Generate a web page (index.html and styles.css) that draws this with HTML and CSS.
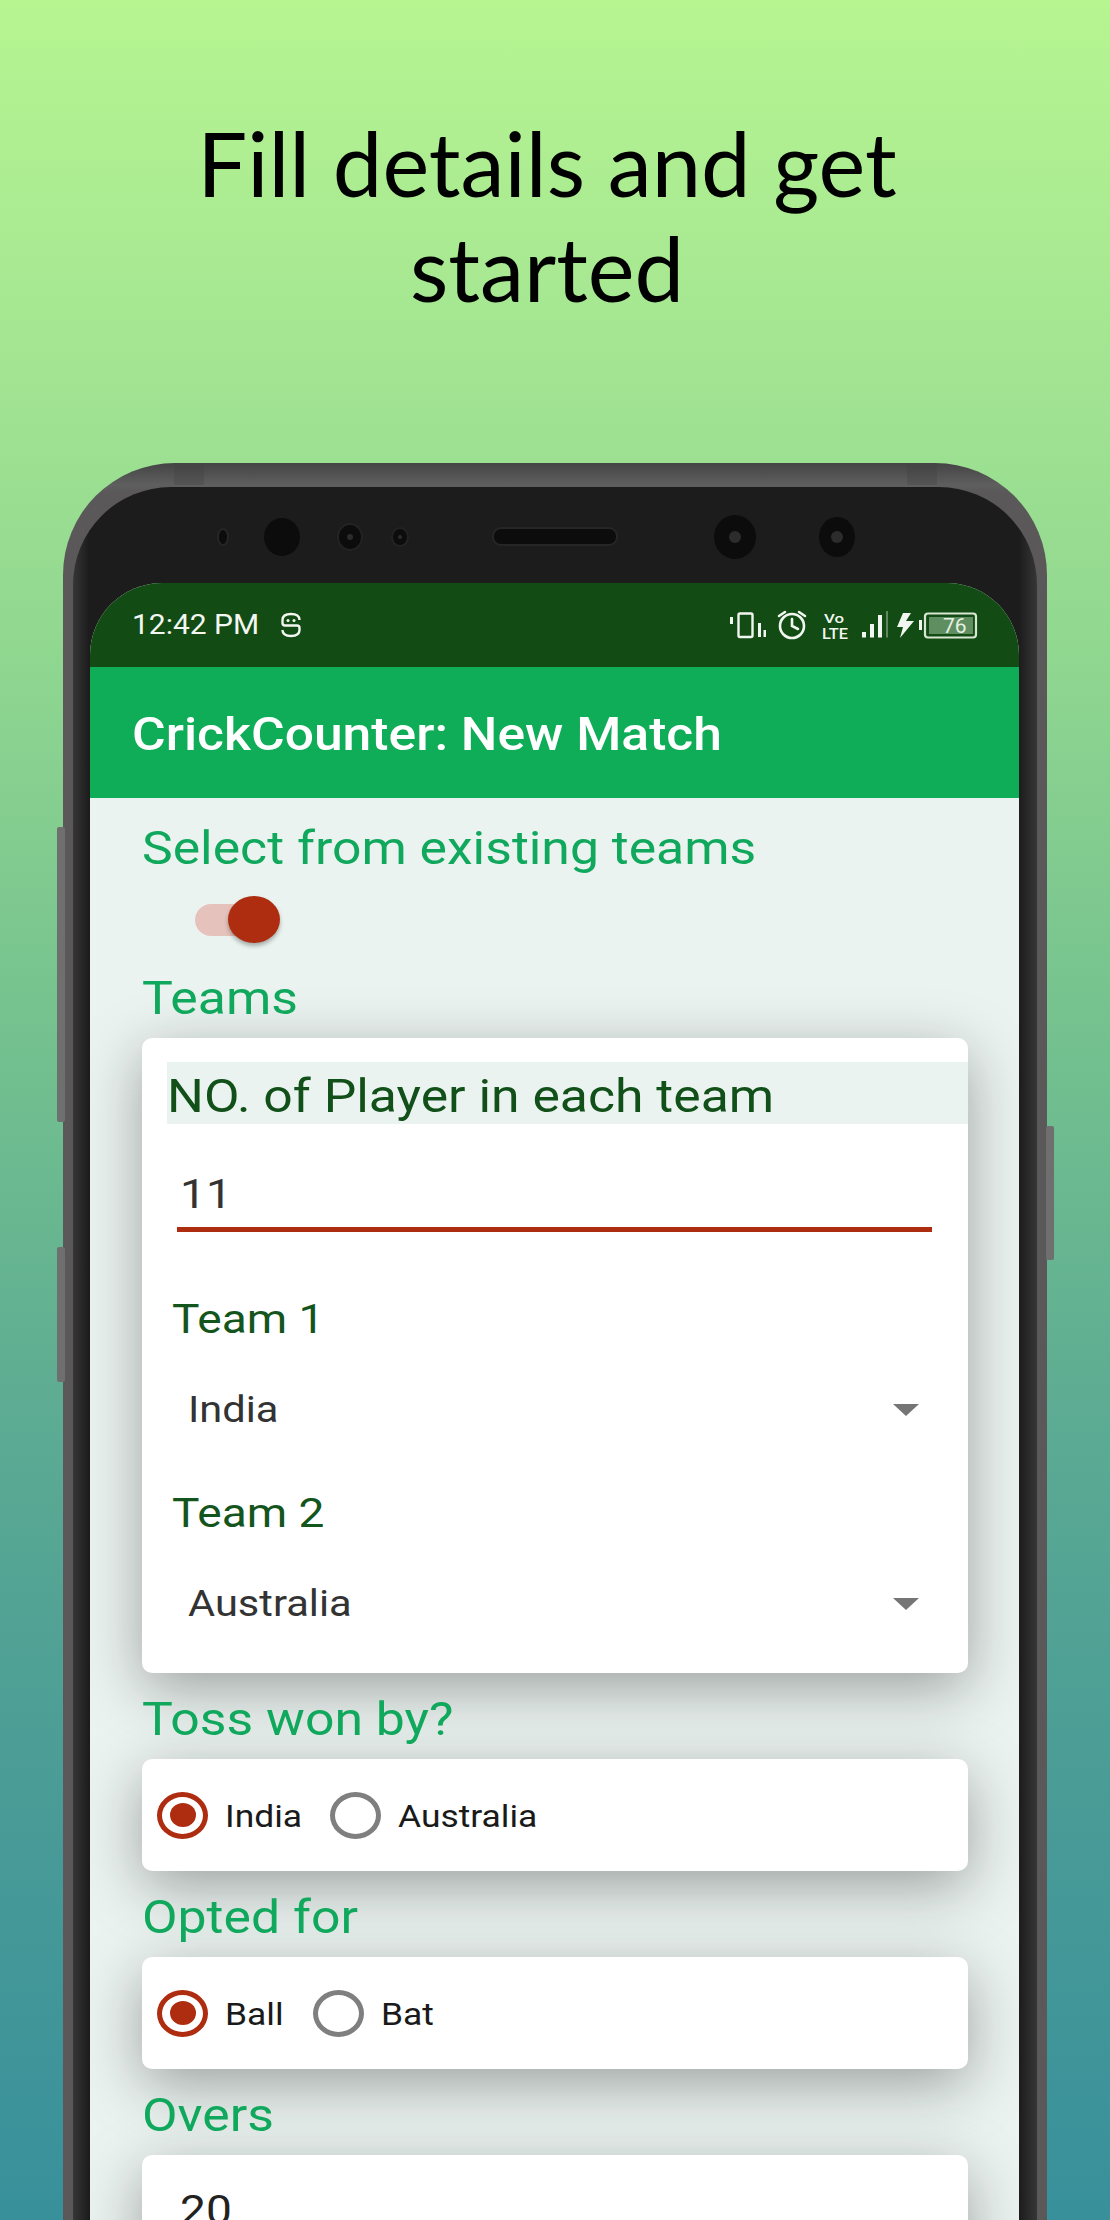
FILE: index.html
```html
<!DOCTYPE html>
<html lang="en">
<head>
<meta charset="utf-8">
<title>CrickCounter</title>
<link rel="stylesheet" href="styles.css">
</head>
<body>
<header class="hero"><h1 class="hero-title">Fill details and get<br>started</h1></header>
<div class="phone">
  <span class="side-btn side-left-a"></span>
  <span class="side-btn side-left-b"></span>
  <span class="side-btn side-right"></span>
  <span class="seam seam-left"></span>
  <span class="seam seam-right"></span>
  <div class="bezel">
    <svg class="sensors" viewBox="0 0 930 96" width="930" height="96">
      <g fill="#0c0c0c">
        <ellipse cx="133" cy="50" rx="5" ry="8" stroke="#262626" stroke-width="2"/>
        <ellipse cx="192" cy="50" rx="18" ry="19"/>
        <ellipse cx="260" cy="50" rx="12" ry="13" stroke="#232323" stroke-width="2"/>
        <ellipse cx="310" cy="50" rx="8" ry="9" stroke="#232323" stroke-width="2"/>
        <rect x="403" y="41" width="124" height="17" rx="8" stroke="#262626" stroke-width="2"/>
        <ellipse cx="645" cy="50" rx="21" ry="22"/>
        <ellipse cx="747" cy="50" rx="18" ry="20"/>
      </g>
      <circle cx="645" cy="50" r="6" fill="#2c2c2c"/>
      <circle cx="747" cy="50" r="6" fill="#2c2c2c"/>
      <circle cx="260" cy="50" r="3" fill="#2c2c2c"/>
      <circle cx="310" cy="50" r="2" fill="#2c2c2c"/>
    </svg>
    <div class="screen">
      <div class="status-bar">
        <span class="clock">12:42 PM</span>
        <svg class="status-s" viewBox="0 0 22 26" width="22" height="26">
          <path d="M19.5 8 Q19.5 2 11 2 Q2.5 2 2.5 8 V11 Q2.5 13.5 5 13.5 H17 Q19.5 13.5 19.5 16 V18 Q19.5 24 11 24 Q2.5 24 2.5 18" fill="none" stroke="#f3f6f1" stroke-width="2.4"/>
          <circle cx="8" cy="8.5" r="1.5" fill="#f3f6f1"/>
          <circle cx="14" cy="8.5" r="1.5" fill="#f3f6f1"/>
        </svg>
        <svg class="status-icons" viewBox="0 0 256 34" width="256" height="34">
          <rect x="8.5" y="5.5" width="14" height="23.5" rx="1.5" fill="none" stroke="#f2f6f0" stroke-width="2.4"/>
          <g fill="#f2f6f0">
            <rect x="0" y="9" width="3" height="7"/>
            <rect x="28" y="15" width="3" height="14"/>
            <rect x="33.5" y="22" width="2.5" height="7"/>
          </g>
          <g fill="none" stroke="#f2f6f0" stroke-width="2.6" stroke-linecap="round">
            <circle cx="62" cy="18" r="12"/>
            <path d="M62 11 V18 L68 21"/>
            <path d="M49 8 L55 4 M75 8 L69 4"/>
          </g>
          <text class="st-vo" x="94" y="14.5" textLength="20" lengthAdjust="spacingAndGlyphs">Vo</text>
          <text class="st-lte" x="92" y="31" textLength="26" lengthAdjust="spacingAndGlyphs">LTE</text>
          <g fill="#f2f6f0">
            <rect x="132" y="24" width="4" height="5.5"/>
            <rect x="140" y="16" width="4" height="13.5"/>
            <rect x="148" y="7" width="4" height="22.5"/>
            <rect x="156" y="3" width="2" height="26.5" opacity=".35"/>
          </g>
          <path d="M181 5 H173 L167 19 H173 L170 30 L184 13 H176 Z" fill="#f2f6f0"/>
          <rect x="189" y="12" width="3" height="10" fill="#f2f6f0"/>
          <rect x="195" y="5.5" width="51" height="24" rx="3" fill="none" stroke="#d9e6d4" stroke-width="2.2"/>
          <rect x="199" y="9" width="44" height="17" fill="#5f8f60"/>
          <text class="st-batt" x="213" y="25">76</text>
        </svg>
      </div>
      <div class="app-bar"><span class="app-title">CrickCounter: New Match</span></div>
      <main class="content">
        <div class="label label-first">Select from existing teams</div>
        <div class="toggle"><span class="toggle-track"></span><span class="toggle-thumb"></span></div>
        <div class="label label-tight">Teams</div>
        <section class="card card-teams">
          <div class="strip"><span class="wide">NO. of Player in each team</span></div>
          <div class="number-input"><span class="wide">11</span></div>
          <div class="team-label"><span class="wide">Team 1</span></div>
          <div class="team-select"><span class="wide">India</span><i class="arrow"></i></div>
          <div class="team-label team-label-next"><span class="wide">Team 2</span></div>
          <div class="team-select team-select-last"><span class="wide">Australia</span><i class="arrow"></i></div>
        </section>
        <div class="label">Toss won by?</div>
        <section class="card card-radio">
          <div class="option"><span class="radio radio-on"></span><span class="wide">India</span></div>
          <div class="option"><span class="radio"></span><span class="wide">Australia</span></div>
        </section>
        <div class="label">Opted for</div>
        <section class="card card-radio">
          <div class="option"><span class="radio radio-on"></span><span class="wide">Ball</span></div>
          <div class="option"><span class="radio"></span><span class="wide">Bat</span></div>
        </section>
        <div class="label">Overs</div>
        <section class="card card-overs"><span class="wide">20</span></section>
      </main>
    </div>
  </div>
</div>
</body>
</html>
```
FILE: styles.css
```css
* { box-sizing: border-box; }
html, body { margin: 0; height: 2220px; overflow: hidden; }
body {
  width: 1110px;
  font-family: Roboto, "Liberation Sans", sans-serif;
  background: linear-gradient(180deg, #b7f591 0%, #a6e792 14%, #8fd690 30%, #6fbd8f 50%, #5cab93 64%, #4a9c96 80%, #38909b 100%);
}
.wide { display: inline-block; transform: scaleX(1.124); transform-origin: left center; }
.hero { height: 463px; padding: 111px 16px 0 0; text-align: center; }
.hero-title {
  margin: 0;
  font-family: Lato, sans-serif;
  font-weight: 400;
  font-size: 88.5px;
  line-height: 105px;
  color: #000;
}
.phone {
  position: relative;
  width: 984px;
  margin-left: 63px;
  height: 1800px;
  padding: 24px 10px 0;
  border-radius: 112px 112px 0 0;
  background: linear-gradient(180deg, #444 0, #5f5f5f 22px, #5a5858 30px);
}
.side-btn { position: absolute; width: 8px; background: #6f6f70; border-radius: 2px; }
.side-left-a { left: -6px; top: 364px; height: 295px; }
.side-left-b { left: -6px; top: 784px; height: 135px; }
.side-right { right: -7px; top: 663px; height: 134px; }
.seam { position: absolute; top: 2px; width: 30px; height: 20px; background: #3f3f3f; opacity: .3; }
.seam-left { left: 111px; }
.seam-right { right: 110px; }
.bezel {
  position: relative;
  height: 1800px;
  padding: 0 18px 0 17px;
  border-radius: 98px 98px 0 0;
  background: linear-gradient(90deg, #363636 0, #1c1c1c 16px, #1c1c1c calc(100% - 18px), #363636 100%);
}
.sensors { display: block; }
.screen {
  width: 929px;
  border-radius: 72px 72px 0 0;
  overflow: hidden;
  background: #ebf3f0;
}
.status-bar {
  display: flex;
  align-items: center;
  height: 84px;
  padding: 0 33px 0 42px;
  background: #124c14;
}
.clock {
  display: inline-block;
  font-size: 27px;
  color: #f3f6f1;
  transform: scaleX(1.11);
  transform-origin: left center;
}
.status-s { margin-left: 33px; }
.status-icons { margin-left: auto; }
.st-vo { font: 500 13px Roboto, sans-serif; fill: #f2f6f0; }
.st-lte { font: 500 14px Roboto, sans-serif; fill: #f2f6f0; }
.st-batt { font: 400 21px Roboto, sans-serif; fill: #e8f0e4; }
.app-bar {
  display: flex;
  align-items: center;
  height: 131px;
  padding: 2px 0 0 42px;
  background: #10ad58;
  color: #fff;
  font-size: 47px;
  font-weight: 500;
}
.app-title { display: inline-block; transform: scaleX(1.098); transform-origin: left center; }
.content { padding: 23px 51px 0 52px; }
.label {
  width: fit-content;
  margin: 19px 0 13px;
  font-size: 46px;
  line-height: 54px;
  color: #10a85c;
  white-space: nowrap;
  transform: scaleX(1.124);
  transform-origin: left center;
}
.label-first { margin: 0; }
.label-tight { margin-top: 0; }
.toggle { position: relative; height: 52px; margin: 19px 0 25px; }
.toggle-track {
  position: absolute; left: 53px; top: 10px;
  width: 80px; height: 32px;
  border-radius: 16px;
  background: #e5c3bc;
}
.toggle-thumb {
  position: absolute; left: 86px; top: 2px;
  width: 52px; height: 47px;
  border-radius: 50%;
  background: #ae2d10;
  box-shadow: 0 3px 4px rgba(0,0,0,.3);
}
.card {
  background: #fff;
  border-radius: 10px;
  box-shadow: 0 16px 60px rgba(0,0,0,.34);
}
.card-teams { padding-top: 24px; height: 635px; }
.strip {
  height: 62px;
  margin-left: 25px;
  padding: 6px 0 0;
  font-size: 46px;
  line-height: 57px;
  background: #ebf3f0;
  color: #12501a;
  white-space: nowrap;
}
.number-input {
  margin: 45px 36px 0 35px;
  padding: 0 0 8px 3px;
  border-bottom: 5px solid #ae2d10;
  font-size: 41px;
  line-height: 50px;
  color: #333;
}
.team-label {
  margin: 62px 0 0 30px;
  font-size: 41px;
  line-height: 50px;
  color: #14551e;
}
.team-label-next { margin-top: 0; }
.team-select {
  display: flex;
  justify-content: space-between;
  align-items: center;
  height: 144px;
  padding: 0 49px 12px 46px;
  font-size: 37px;
  line-height: 50px;
  color: #333;
}
.team-select-last { height: 135px; padding-bottom: 3px; }
.arrow {
  width: 0; height: 0;
  border-left: 13px solid transparent;
  border-right: 13px solid transparent;
  border-top: 12px solid #757575;
}
.card-radio {
  display: flex;
  align-items: center;
  gap: 36px;
  height: 112px;
  padding-left: 15px;
}
.option {
  display: flex;
  align-items: center;
  gap: 17px;
  font-size: 31.5px;
  color: #1a1a1a;
}
.option .wide { padding-top: 2px; }
.radio {
  width: 51px; height: 47px;
  border: 5.5px solid #7f7f7f;
  border-radius: 50%;
  display: flex;
  align-items: center;
  justify-content: center;
}
.radio-on { border-color: #ae2d10; }
.radio-on::after {
  content: "";
  width: 26px; height: 24px;
  border-radius: 50%;
  background: #ae2d10;
}
.card-overs {
  height: 112px;
  padding: 30px 0 0 38px;
  font-size: 41px;
  line-height: 50px;
  color: #222;
}
```
